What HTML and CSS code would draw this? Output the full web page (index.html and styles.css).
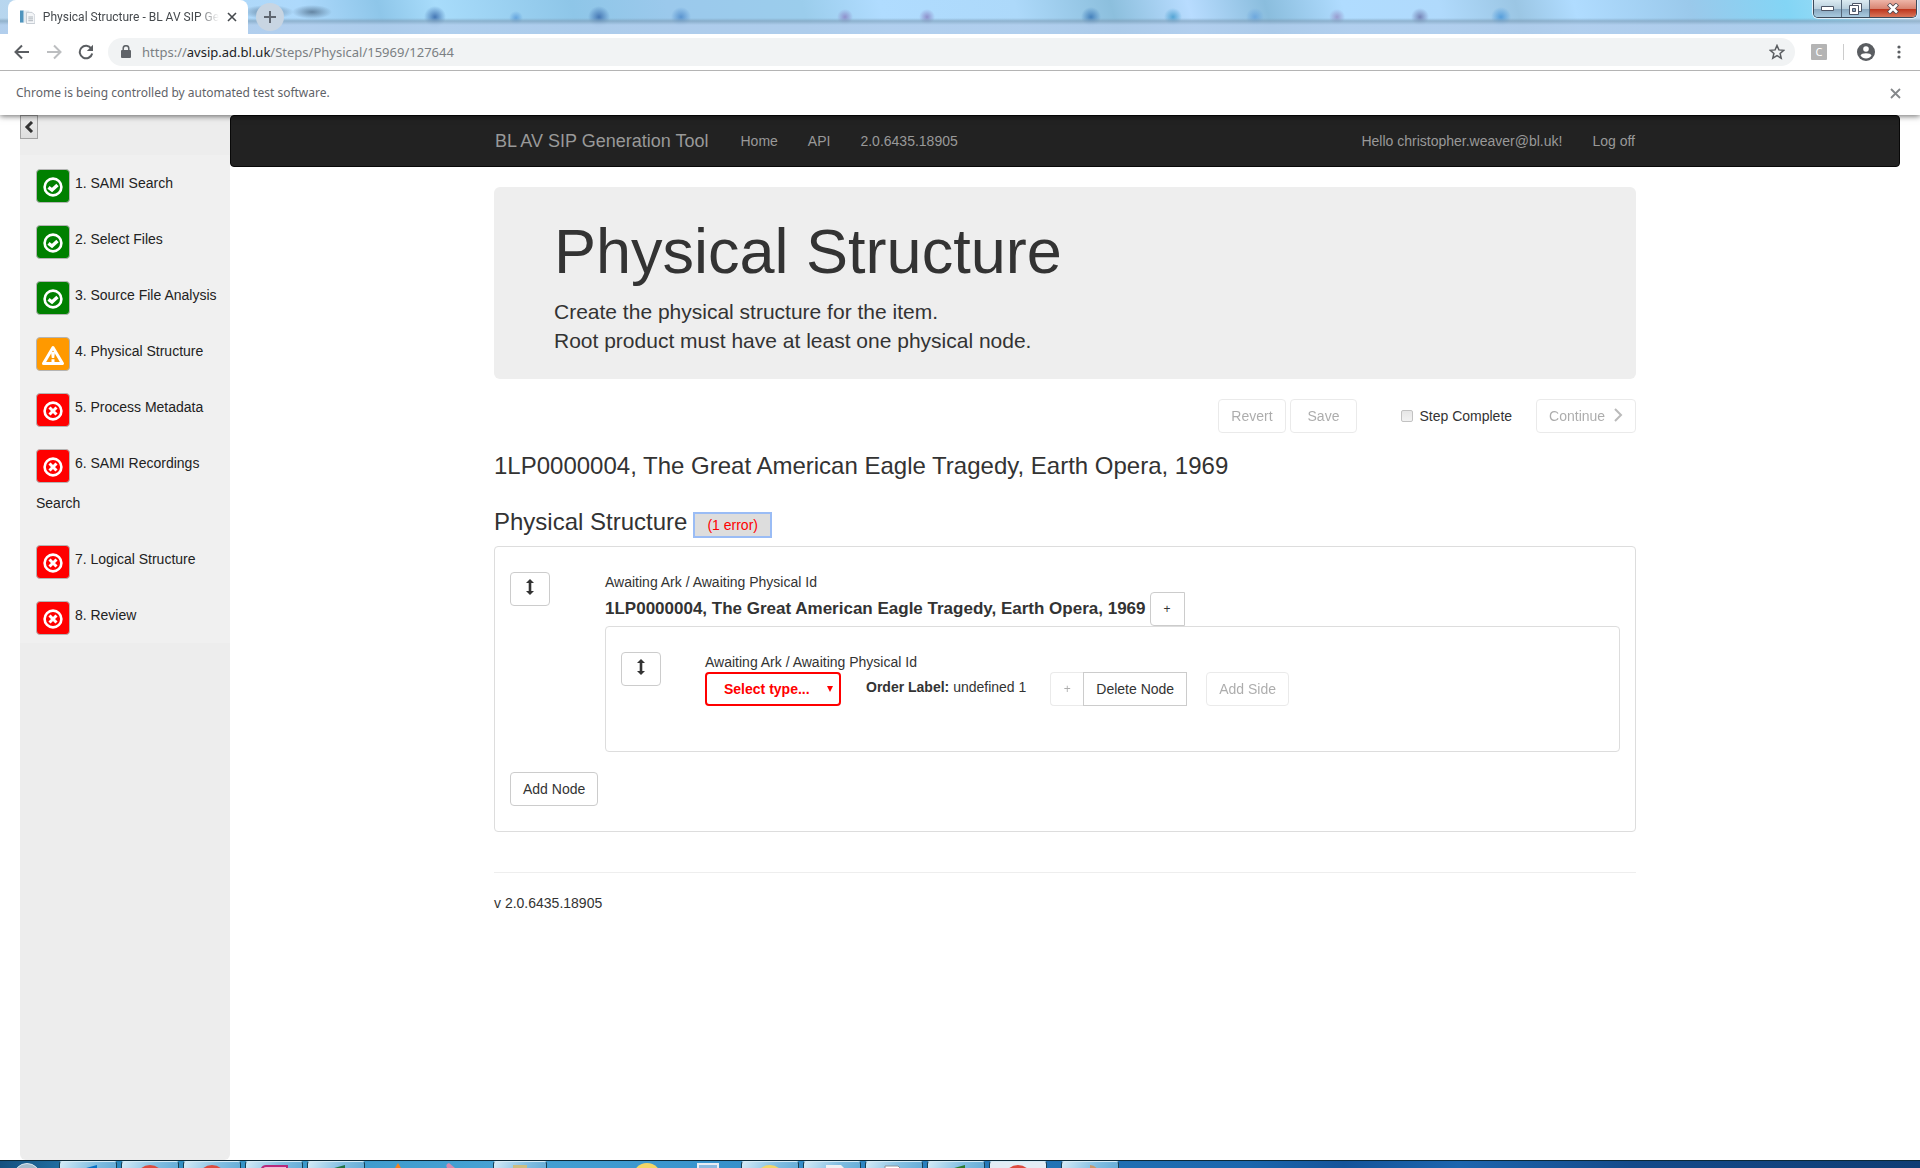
FILE: index.html
```
<!DOCTYPE html>
<html lang="en">
<head>
<meta charset="utf-8">
<title>Physical Structure - BL AV SIP Generation Tool</title>
<link rel="stylesheet" href="styles.css">
</head>
<body>
<svg class="defs" aria-hidden="true">
  <symbol id="ok" viewBox="0 0 20 20"><circle cx="10" cy="10" r="8.4" fill="none" stroke="#fff" stroke-width="2.6"/><path d="M5.500 10.300L9 13L14.500 8" fill="none" stroke="#fff" stroke-width="3.400"/></symbol>
  <symbol id="bad" viewBox="0 0 20 20"><circle cx="10" cy="10" r="8.400" fill="none" stroke="#fff" stroke-width="2.600"/><path d="M6.500 6.500L13.500 13.500M13.500 6.500L6.500 13.500" stroke="#fff" stroke-width="3"/></symbol>
  <symbol id="warn" viewBox="0 0 24 20"><path d="M12 2.500L21.500 18.500H2.500Z" fill="none" stroke="#fff" stroke-width="3" stroke-linejoin="round"/><path d="M10 7h4l-.8 6h-2.400zM10.500 14.200h3v3h-3z" fill="#fff"/></symbol>
  <symbol id="updown" viewBox="0 0 14 16"><path d="M7 0L11 4H8.300V12H11L7 16L3 12H5.700V4H3Z" fill="#333"/></symbol>
</svg>
<header class="browser">
  <div class="titlebar">
    <div class="tab">
      <svg width="16" height="16" viewBox="0 0 16 16"><path d="M0 1h4v13H0z" fill="#4f94bd"/><path d="M4 1h6v13H4z" fill="#e4ebf0"/><path d="M7 3h6l3 3v9H7z" fill="#f4f6f8" stroke="#c2c9d0"/><path d="M9 8h5M9 10h5M9 12h5" stroke="#a9b0b8"/></svg>
      <span class="tab-title">Physical Structure - BL AV SIP Ge</span>
      <button class="plain" aria-label="Close tab"><svg width="10" height="10" viewBox="0 0 10 10"><path d="M1 1l8 8M9 1L1 9" stroke="#45494d" stroke-width="1.600"/></svg></button>
    </div>
    <button class="newtab" aria-label="New tab"><svg width="12" height="12" viewBox="0 0 12 12"><path d="M6 0v12M0 6h12" stroke="#5f6670" stroke-width="2"/></svg></button>
    <div class="winctl">
      <button class="wmin" aria-label="Minimize"><svg width="13" height="6" viewBox="0 0 13 6"><path d="M.5 .5h12v4H.5z" fill="#fff" stroke="#4c5566"/></svg></button>
      <button class="wmax" aria-label="Restore"><svg width="13" height="12" viewBox="0 0 13 12"><path d="M3.500 .5h9v8h-9z" fill="#fff" stroke="#4c5566"/><path d="M.5 2.500h9v9h-9z" fill="#fff" stroke="#4c5566"/><path d="M3.500 5.500h3v3h-3z" fill="#8ba7bf" stroke="#4c5566"/></svg></button>
      <button class="wclose" aria-label="Close"><svg width="12" height="11" viewBox="0 0 12 11"><path d="M1.500 1l9 9M10.500 1l-9 9" stroke="#534a52" stroke-width="4.400"/><path d="M2 1.500l8 8M10 1.500l-8 8" stroke="#fff" stroke-width="2.600"/></svg></button>
    </div>
  </div>
  <div class="toolbar">
    <button class="plain" aria-label="Back"><svg width="16" height="16" viewBox="0 0 16 16"><path d="M15 8H2M8 1.500L1.500 8L8 14.500" fill="none" stroke="#5a5d61" stroke-width="2"/></svg></button>
    <button class="plain" aria-label="Forward"><svg width="16" height="16" viewBox="0 0 16 16"><path d="M1 8h13M8 1.500L14.500 8L8 14.500" fill="none" stroke="#bcbec0" stroke-width="2"/></svg></button>
    <button class="plain" aria-label="Reload"><svg width="16" height="16" viewBox="0 0 16 16"><path d="M13.300 4.500A6.300 6.300 0 1 0 14.200 9.500" fill="none" stroke="#5a5d61" stroke-width="2"/><path d="M15 .8V7H8.800z" fill="#5a5d61"/></svg></button>
    <div class="omnibox">
      <svg width="10" height="14" viewBox="0 0 10 14"><path d="M1 5h8q1 0 1 1v6q0 1-1 1H1q-1 0-1-1V6q0-1 1-1z" fill="#5f6368"/><path d="M2.200 6V3.500a2.800 2.800 0 0 1 5.600 0V6" fill="none" stroke="#5f6368" stroke-width="1.500"/></svg>
      <span class="url">https://<b>avsip.ad.bl.uk</b>/Steps/Physical/15969/127644</span>
      <button class="plain" aria-label="Bookmark"><svg width="16" height="16" viewBox="0 0 16 16"><path d="M8 1.500l1.900 4.400 4.800.4-3.600 3.200 1.100 4.700L8 11.700l-4.200 2.500 1.100-4.700L1.300 6.300l4.800-.4z" fill="none" stroke="#5a5d61" stroke-width="1.500"/></svg></button>
    </div>
    <span class="ext">C</span>
    <span class="divider"></span>
    <button class="plain user" aria-label="Profile"><svg width="18" height="18" viewBox="0 0 18 18"><circle cx="9" cy="9" r="9" fill="#5a5d61"/><circle cx="9" cy="6" r="2.800" fill="#fff"/><path d="M3.500 12.500q1-2.300 5.500-2.300t5.500 2.300q-2 3-5.500 3t-5.500-3z" fill="#fff"/></svg></button>
    <button class="plain" aria-label="Menu"><svg width="4" height="14" viewBox="0 0 4 14"><circle cx="2" cy="2" r="1.600" fill="#5a5d61"/><circle cx="2" cy="7" r="1.600" fill="#5a5d61"/><circle cx="2" cy="12" r="1.600" fill="#5a5d61"/></svg></button>
  </div>
  <div class="infobar">
    <span>Chrome is being controlled by automated test software.</span>
    <button class="plain" aria-label="Dismiss"><svg width="11" height="11" viewBox="0 0 11 11"><path d="M1 1l9 9M10 1l-9 9" stroke="#85888b" stroke-width="1.800"/></svg></button>
  </div>
</header>

<div class="page">
  <aside class="sidebar">
    <div class="side-head"><button class="collapse" aria-label="Collapse menu"><svg width="10" height="12" viewBox="0 0 10 12"><path d="M8 1L3 6l5 5" fill="none" stroke="#333" stroke-width="3"/></svg></button></div>
    <ol class="steps">
      <li><span class="st green"><svg width="20" height="20"><use href="#ok"/></svg></span> 1. SAMI Search</li>
      <li><span class="st green"><svg width="20" height="20"><use href="#ok"/></svg></span> 2. Select Files</li>
      <li><span class="st green"><svg width="20" height="20"><use href="#ok"/></svg></span> 3. Source File Analysis</li>
      <li><span class="st amber"><svg width="24" height="20"><use href="#warn"/></svg></span> 4. Physical Structure</li>
      <li><span class="st red"><svg width="20" height="20"><use href="#bad"/></svg></span> 5. Process Metadata</li>
      <li><span class="st red"><svg width="20" height="20"><use href="#bad"/></svg></span> 6. SAMI Recordings Search</li>
      <li><span class="st red"><svg width="20" height="20"><use href="#bad"/></svg></span> 7. Logical Structure</li>
      <li><span class="st red"><svg width="20" height="20"><use href="#bad"/></svg></span> 8. Review</li>
    </ol>
  </aside>
  <div class="main">
    <nav class="navbar">
      <div class="container nav-in">
        <a class="brand" href="#">BL AV SIP Generation Tool</a>
        <a href="#">Home</a><a href="#">API</a><a href="#">2.0.6435.18905</a>
        <a class="right" href="#">Hello christopher.weaver@bl.uk!</a><a class="last" href="#">Log off</a>
      </div>
    </nav>
    <main class="container">
      <section class="jumbo">
        <h1>Physical Structure</h1>
        <p>Create the physical structure for the item.<br>Root product must have at least one physical node.</p>
      </section>
      <div class="actions">
        <button class="btn" disabled>Revert</button>
        <button class="btn save" disabled>Save</button>
        <label class="complete"><input type="checkbox" disabled>Step Complete</label>
        <button class="btn" disabled>Continue <svg width="10" height="14" viewBox="0 0 10 14"><path d="M2 1l6 6-6 6" fill="none" stroke="#555" stroke-width="2"/></svg></button>
      </div>
      <h2>1LP0000004, The Great American Eagle Tragedy, Earth Opera, 1969</h2>
      <div class="section-head"><h2>Physical Structure</h2><button class="error">(1 error)</button></div>
      <div class="panel outer">
        <div class="node">
          <button class="btn handle" aria-label="Move"><svg width="14" height="16"><use href="#updown"/></svg></button>
          <div class="node-body">
            <div>Awaiting Ark / Awaiting Physical Id</div>
            <div class="node-title"><strong>1LP0000004, The Great American Eagle Tragedy, Earth Opera, 1969</strong><button class="btn plus">+</button></div>
            <div class="panel inner">
              <div class="node">
                <button class="btn handle" aria-label="Move"><svg width="14" height="16"><use href="#updown"/></svg></button>
                <div class="node-body child">
                  <div>Awaiting Ark / Awaiting Physical Id</div>
                  <div class="fields">
                    <span class="select"><select aria-label="Type"><option>Select type...</option></select></span>
                    <span class="order"><b>Order Label:</b> undefined 1</span>
                    <span class="group"><button class="btn plus first" disabled>+</button><button class="btn del">Delete Node</button></span>
                    <button class="btn" disabled>Add Side</button>
                  </div>
                </div>
              </div>
            </div>
          </div>
        </div>
        <button class="btn">Add Node</button>
      </div>
      <footer>v 2.0.6435.18905</footer>
    </main>
  </div>
</div>

<div class="taskbar">
  <span class="orb"></span>
  <span class="task"><svg width="18" height="5"><path d="M0 5L18 0V5z" fill="#0b72c4"/></svg></span>
  <span class="task"><i class="dot chrome"></i></span>
  <span class="task"><i class="dot chrome"></i></span>
  <span class="task"><svg width="28" height="6"><path d="M1 6Q2 1 6 1H27V6" fill="#f4b9d6" stroke="#b8287a" stroke-width="2"/></svg></span>
  <span class="task"><svg width="18" height="5"><path d="M0 5L18 0V5z" fill="#217346"/></svg></span>
  <span class="loose"><svg width="60" height="5"><path d="M0 5L3 0L6 5z" fill="#f58220"/><path d="M52 5Q50 1 54 0L60 5z" fill="#d58cae"/></svg></span>
  <span class="task wide"><svg width="14" height="4"><path d="M0 0H14V4H0z" fill="#cdbd80"/></svg></span>
  <span class="loose end"><i class="dot gold"></i><svg width="22" height="5"><path d="M1 5V1H21V5" fill="#8dbbe0" stroke="#e8eef4" stroke-width="2"/></svg></span>
  <span class="task"><i class="dot gold"></i></span>
  <span class="task"><svg width="28" height="6"><path d="M8 0H23L27 4V6H8z" fill="#eef1f4"/><path d="M0 3H22V6H0z" fill="#d9311b"/></svg></span>
  <span class="task"><svg width="20" height="6"><path d="M1 6V1H14L18 5" fill="#fff" stroke="#8b949c"/><path d="M4 4H12" stroke="#8b949c"/></svg></span>
  <span class="task"><svg width="18" height="5"><path d="M0 5L18 0V5z" fill="#2c7b2f"/></svg></span>
  <span class="task active"><i class="dot chrome"></i></span>
  <span class="task gap"><svg width="18" height="5"><path d="M9 0Q14 0 17 5H9z" fill="#c99a6e"/></svg></span>
</div>
</body>
</html>
```

FILE: styles.css
```
* { box-sizing: border-box; }
body {
  margin: 0;
  height: 100vh;
  display: flex;
  flex-direction: column;
  overflow: hidden;
  background: #fff;
  color: #333;
  font: 14px/20px "Liberation Sans", Arial, sans-serif;
}
button, select, input { font: inherit; color: inherit; margin: 0; }
.defs { position: absolute; width: 0; height: 0; }
.plain { border: 0; background: none; padding: 0; display: flex; }

/* browser window */
.browser {
  position: relative;
  z-index: 1;
  flex: none;
  font-family: "Noto Sans", "Open Sans", sans-serif;
  box-shadow: 0 1px 6px rgba(0, 0, 0, .6);
}
.titlebar {
  height: 34px;
  display: flex;
  align-items: flex-start;
  padding: 0 3px 0 8px;
  background:
    linear-gradient(#a9c6e600 18px, #7f9fb9aa 21px, #b1cdecdd 25px, #b1cdecdd 100%),
    radial-gradient(ellipse 26px 7px at 268px 12px, #53718dcc, transparent),
    radial-gradient(ellipse 20px 7px at 312px 12px, #53718dcc, transparent),
    radial-gradient(circle at 435px 17px, #4678b5, transparent 11px),
    radial-gradient(circle at 516px 18px, #65a5df, transparent 7px),
    radial-gradient(circle at 599px 17px, #4678b5, transparent 11px),
    radial-gradient(circle at 681px 17px, #5b95d0, transparent 10px),
    radial-gradient(circle at 845px 17px, #8f91cc, transparent 8px),
    radial-gradient(circle at 927px 17px, #8f91cc, transparent 8px),
    radial-gradient(circle at 1091px 17px, #4682bd, transparent 10px),
    radial-gradient(circle at 1173px 17px, #55a5d5, transparent 9px),
    radial-gradient(circle at 1255px 17px, #6ea8de, transparent 9px),
    radial-gradient(circle at 1337px 17px, #999dd0, transparent 8px),
    radial-gradient(circle at 1420px 17px, #7786b8, transparent 9px),
    radial-gradient(circle at 1501px 17px, #579fdc, transparent 10px),
    linear-gradient(75deg, #b8d6ee 0, #add9fc 16%, #8ec6e9 20%, #a8dcfb 23%, #8ec6e8 30%, #9bc9ec 35%, #9bcdec 42%, #b0dcff 46%, #add9fa 53%, #8cbfdd 58%, #b8dcff 62%, #8abddd 66%, #b0dcff 70%, #b0dafc 75%, #9bc6e4 79%, #b0dcff 82%, #9ac9eb 88%, #83d5f5 93%, #9bdcf6 96%, #c5dcf2 100%);
}
.tab {
  width: 240px;
  height: 34px;
  display: flex;
  align-items: center;
  gap: 8px;
  padding: 0 11px 0 12px;
  background: #fff;
  border-radius: 8px 8px 0 0;
}
.tab-title {
  flex: 1;
  white-space: nowrap;
  font-family: Roboto, sans-serif;
  font-size: 12px;
  color: #45494d;
  mask-image: linear-gradient(90deg, #000 88%, transparent);
}
.newtab {
  width: 28px;
  height: 28px;
  margin: 3px 0 0 8px;
  padding: 0;
  border: 0;
  border-radius: 14px;
  background: #c8d5e2;
  display: grid;
  place-items: center;
}
.winctl {
  margin-left: auto;
  display: flex;
  height: 18px;
  border: 1px solid #3c4a5a;
  border-top: 0;
  border-radius: 0 0 5px 5px;
  overflow: hidden;
  box-shadow: 0 0 0 1px #e3f0f9;
}
.winctl button { border: 0; padding: 0; display: grid; place-items: center; }
.winctl .wmin, .winctl .wmax { width: 28px; border-right: 1px solid #55677a; background: linear-gradient(#dcebf2, #b9cfdd 50%, #87a5bd 51%, #a9cbe0); }
.winctl .wclose { width: 46px; background: linear-gradient(#eeb5a8, #d88573 50%, #bb3018 51%, #d9765a); }
.toolbar {
  height: 37px;
  display: flex;
  align-items: center;
  gap: 16px;
  padding: 0 19px 0 14px;
  background: #fff;
  border-bottom: 1px solid #b4b4b4;
}
.omnibox {
  flex: 1;
  height: 28px;
  margin-left: -2px;
  display: flex;
  align-items: center;
  padding: 0 10px 0 13px;
  border-radius: 14px;
  background: #f1f3f4;
}
.url { flex: 1; margin-left: 11px; font-size: 13px; color: #7b7f83; }
.url b { font-weight: 400; color: #202124; }
.ext { width: 16px; height: 16px; border-radius: 1px; background: #b4b4b4; color: #fff; font-size: 11px; line-height: 16px; text-align: center; }
.divider { width: 1px; height: 16px; background: #ccc; }
.user { margin: 0 6px 0 -3px; }
.infobar {
  height: 44px;
  display: flex;
  align-items: center;
  justify-content: space-between;
  padding: 0 19px 0 16px;
  background: #fff;
  color: #5f6368;
  font-size: 12px;
}

/* application */
.page { flex: 1; min-height: 0; display: flex; padding: 0 20px; overflow: hidden; }
.sidebar { width: 210px; flex: none; background: #ededed; border-radius: 0 0 6px 6px; color: #222; }
.side-head { height: 40px; }
.collapse { width: 18px; height: 24px; padding: 0; border: 1px solid #a3a3a3; background: linear-gradient(#eee, #ddd); display: grid; place-items: center; }
.steps { list-style: none; margin: 0; padding: 0; background: #f0f0f0; }
.steps li { padding: 8px 12px 8px 16px; line-height: 40px; }
.st { display: inline-flex; width: 34px; height: 34px; margin-right: 1px; align-items: center; justify-content: center; vertical-align: -9px; border: 1px solid #b4b4b4; border-radius: 4px; padding-top: 2px; }
.green { background: #008000; }
.amber { background: #ff9900; }
.red { background: #f00; }

.main { flex: 1; min-width: 0; }
.container { width: 100%; max-width: 1142px; margin: 0 auto; }
.navbar { background: #222; border: 1px solid #080808; border-radius: 4px; margin-bottom: 20px; }
.nav-in { display: flex; align-items: center; height: 50px; gap: 30px; padding: 0 1px; }
.nav-in a { color: #999; text-decoration: none; white-space: nowrap; }
.nav-in .brand { font-size: 18px; margin-right: 2px; }
.nav-in .right { margin-left: auto; }

.jumbo { background: #eee; border-radius: 6px; padding: 29px 60px 24px; }
h1 { margin: 0 0 11px; font-size: 63px; line-height: 70px; font-weight: 400; }
.jumbo p { margin: 0; font-size: 21px; line-height: 29px; }
h2 { margin: 0; font-size: 24px; line-height: 26px; font-weight: 400; }
.actions { display: flex; align-items: center; justify-content: flex-end; gap: 4px; margin: 20px 0; }
.btn { height: 34px; padding: 0 12px; border: 1px solid #ccc; border-radius: 4px; background: #fff; white-space: nowrap; }
.btn:disabled { opacity: .4; }
.btn svg { vertical-align: -1px; }
.actions .btn svg { margin-left: 4px; }
.save { padding: 0 17px; }
.complete { display: flex; align-items: center; margin: 0 20px 0 40px; gap: 6px; }
.complete input { appearance: none; width: 12px; height: 12px; border: 1px solid #c2c2c2; border-radius: 2px; background: linear-gradient(#e6e6e6, #f2f2f2); }
.section-head { display: flex; align-items: baseline; gap: 6px; margin-top: 30px; }
.error { height: 26px; padding: 0 12px; border: 2px solid #9abcf5; background: #ddd; color: #f00; }
.panel { border: 1px solid #ddd; border-radius: 4px; }
.outer { margin-top: 8px; padding: 25px 15px; }
.node { display: flex; align-items: flex-start; }
.handle { width: 40px; padding: 0; flex: none; }
.node-body { flex: 1; margin-left: 55px; }
.node-title { display: flex; align-items: center; gap: 4px; font-size: 17px; }
.plus { width: 35px; padding: 0; font-size: 12px; border-radius: 4px 0 0 4px; }
.inner { padding: 25px 15px 45px; margin-bottom: 20px; }
.child { margin-left: 44px; }
.fields { display: flex; align-items: flex-start; }
.select { position: relative; width: 136px; margin-right: 25px; }
.select::after { content: ""; position: absolute; right: 8px; top: 14px; border: 3px solid transparent; border-top: 6px solid #f00; border-bottom: 0; pointer-events: none; }
.select select { appearance: none; width: 100%; height: 34px; padding: 0 17px; border: 2px solid #f00; border-radius: 4px; background: #fff; color: #f00; font-weight: 700; }
.order { margin: 5px 24px 0 0; }
.group { display: flex; margin-right: 19px; }
.first { width: 33px; border-right: 0; }
.del { border-radius: 0; }
footer { margin-top: 40px; padding-top: 20px; border-top: 1px solid #eee; }

/* desktop taskbar */
.taskbar {
  flex: none;
  height: 8px;
  overflow: hidden;
  display: flex;
  gap: 4px;
  border-top: 1px solid #0b2836;
  background: linear-gradient(90deg, #14507f, #2a88bd 6%, #3f9bcd 18%, #45a2d4 26%, #348fca 40%, #2377b8 52%, #1b66ad 65%, #14549a 70%, #1c65ae 76%, #144a8a 85%, #0f3d74 100%);
}
.orb { width: 28px; height: 28px; margin: 2px 14px 0 13px; border-radius: 14px; background: #a5bccb; border: 1px solid #dbe8f0; flex: none; }
.task { flex: none; width: 58px; display: flex; justify-content: center; align-items: flex-start; padding-top: 3px; border: 1px solid #164055; border-top-color: #d6edf8; border-bottom: 0; border-radius: 3px 3px 0 0; background: linear-gradient(120deg, #d5ebf7, #83bfe2 60%, #66add7); }
.task.wide { width: 54px; }
.task.active { background: #e2edf5; }
.task.gap { margin-left: 10px; }
.dot { width: 28px; height: 28px; border-radius: 14px; flex: none; }
.chrome { background: #dd4b3e; }
.gold { background: #f3d667; }
.loose { flex: none; width: 120px; padding: 2px 0 0 26px; display: flex; }
.loose.end { width: 186px; padding-left: 82px; gap: 36px; }
```
